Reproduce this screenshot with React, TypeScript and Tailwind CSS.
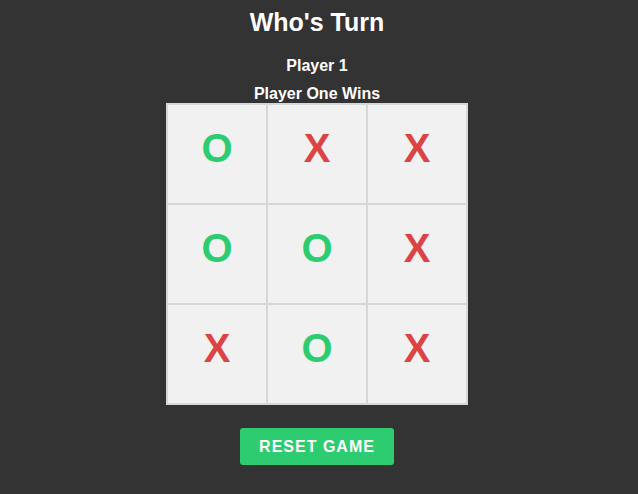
const board = ["O", "X", "X", "O", "O", "X", "X", "O", "X"];

function Cell({ mark }: { mark: string }) {
    return (
        <div className="w-[100px] h-[100px] border border-[#d5d8d8] bg-[#f1f1f1] flex items-center justify-center pb-[12px]">
            <span
                className={`text-[40px] font-bold leading-none ${
                    mark === "X" ? "text-[#dc4444]" : "text-[#2ecc71]"
                }`}
            >
                {mark}
            </span>
        </div>
    );
}

export default function App() {
    return (
        <div className="min-h-[494px] bg-[#333333] text-white flex flex-col items-center pr-[4px] font-['Liberation_Sans',Arial,sans-serif]">
            <h1 className="pt-[8px] text-[25px] leading-[28px] font-bold">Who's Turn</h1>

            <p className="mt-[20px] text-[16px] leading-[20px] font-bold">Player 1</p>
            <p className="mt-[8px] text-[16px] leading-[20px] font-bold">Player One Wins</p>

            {/* BOARD */}
            <div className="-mt-[1px] grid grid-cols-3 border border-[#d5d8d8]">
                {board.map((m, i) => (
                    <Cell key={i} mark={m} />
                ))}
            </div>

            <button className="mt-[23px] w-[154px] h-[37px] bg-[#2ecc71] rounded-[3px] text-[16px] font-bold tracking-[1px] text-white">
                RESET GAME
            </button>
        </div>
    );
}
